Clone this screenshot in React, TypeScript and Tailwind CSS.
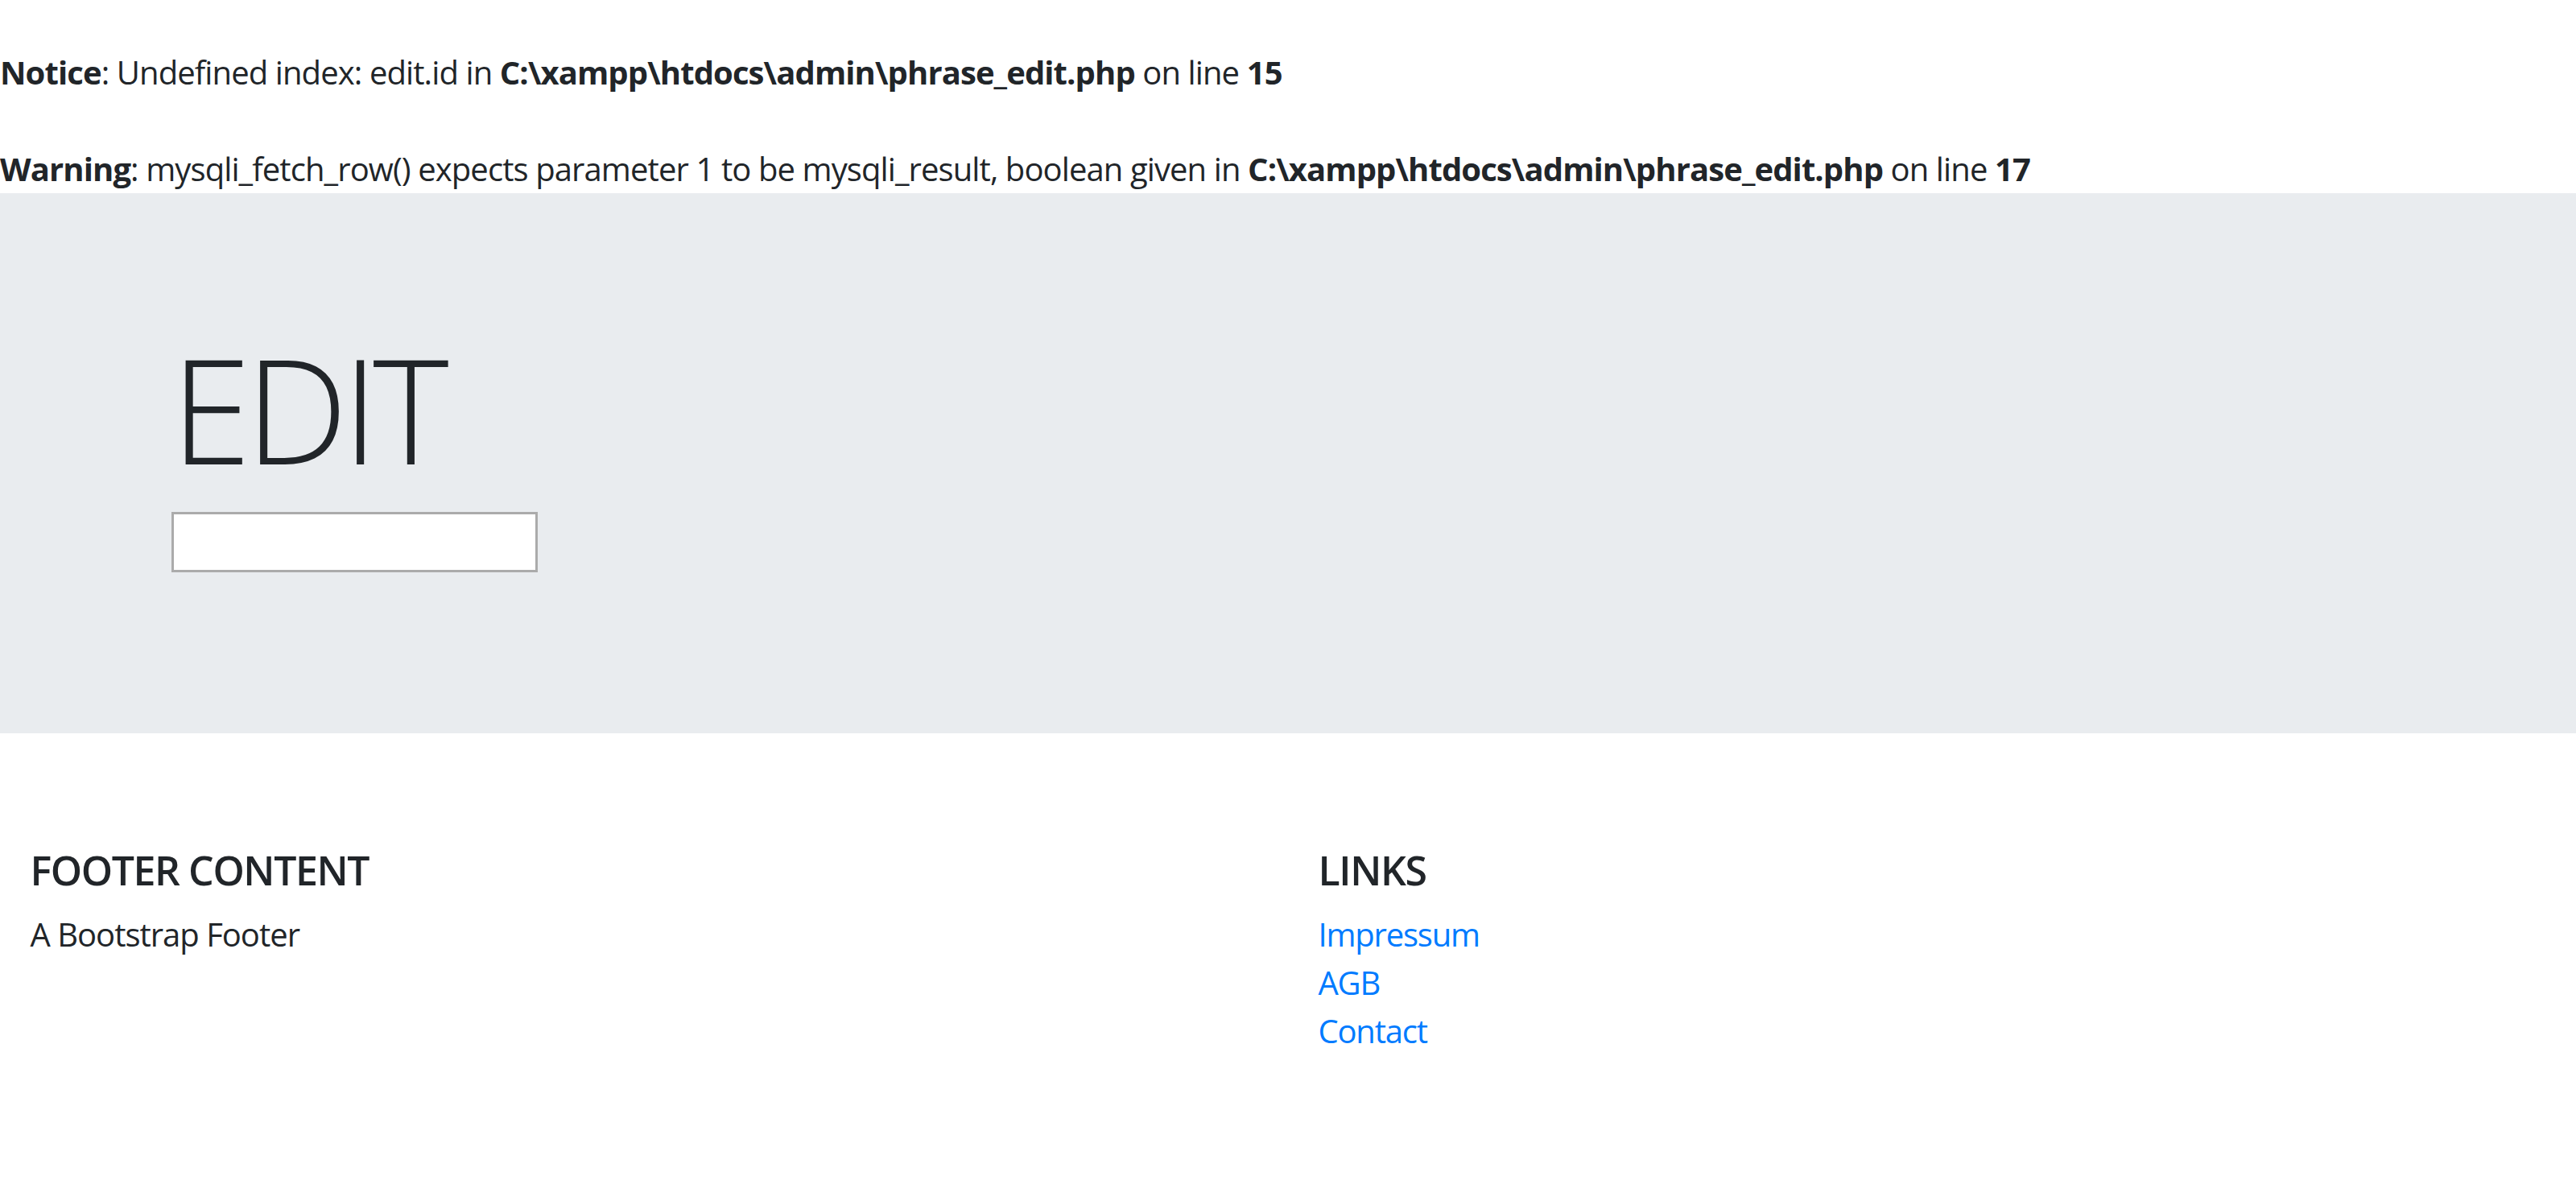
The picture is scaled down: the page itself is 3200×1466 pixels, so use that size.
export default function App() {
  const font = { fontFamily: '"Open Sans", "Noto Sans", sans-serif' };
  return (
    <div className="min-h-[1466px] bg-white text-[#212529] font-['Open_Sans','Noto_Sans',sans-serif]">
      <div className="text-[40px] leading-[60px] tracking-[-0.9px]">
        <div className="h-[60px]"></div>
        <div>
          <b className="font-bold">Notice</b>: Undefined index: edit.id in{" "}
          <b className="font-bold">C:\xampp\htdocs\admin\phrase_edit.php</b> on line{" "}
          <b className="font-bold">15</b>
        </div>
        <div className="h-[60px]"></div>
        <div>
          <b className="font-bold">Warning</b>: mysqli_fetch_row() expects parameter 1 to be mysqli_result, boolean given in{" "}
          <b className="font-bold">C:\xampp\htdocs\admin\phrase_edit.php</b> on line{" "}
          <b className="font-bold">17</b>
        </div>
      </div>

      <div className="bg-[#e9ecef] py-[160px] mb-[80px]">
        <div className="mx-auto w-[2850px] px-[37.5px]">
          <h1 className="text-[180px] leading-[216px] font-light tracking-[-7px] mb-[20px]">EDIT</h1>
          <p className="mb-[40px] text-[40px] leading-[60px]">
            <input
              type="text"
              className="block w-[455px] h-[75px] bg-white border-[3px] border-[#ababab] outline-none"
              style={font}
            />
          </p>
        </div>
      </div>

      <footer className="pt-[60px]">
        <div className="px-[37.5px]">
          <div className="flex -mx-[37.5px]">
            <div className="w-1/2 px-[37.5px]">
              <h5 className="text-[50px] leading-[60px] font-semibold tracking-[-1.4px] uppercase mb-[20px]">Footer Content</h5>
              <p className="text-[40px] leading-[60px] tracking-[-1px] mb-[40px]">A Bootstrap Footer</p>
            </div>
            <div className="w-1/4 px-[37.5px]">
              <h5 className="text-[50px] leading-[60px] font-semibold tracking-[-1.4px] uppercase mb-[20px]">Links</h5>
              <ul className="text-[40px] leading-[60px] tracking-[-1.2px] mb-[40px]">
                <li><a href="#" className="text-[#007bff]">Impressum</a></li>
                <li><a href="#" className="text-[#007bff]">AGB</a></li>
                <li><a href="#" className="text-[#007bff]">Contact</a></li>
              </ul>
            </div>
          </div>
        </div>
      </footer>
    </div>
  );
}
